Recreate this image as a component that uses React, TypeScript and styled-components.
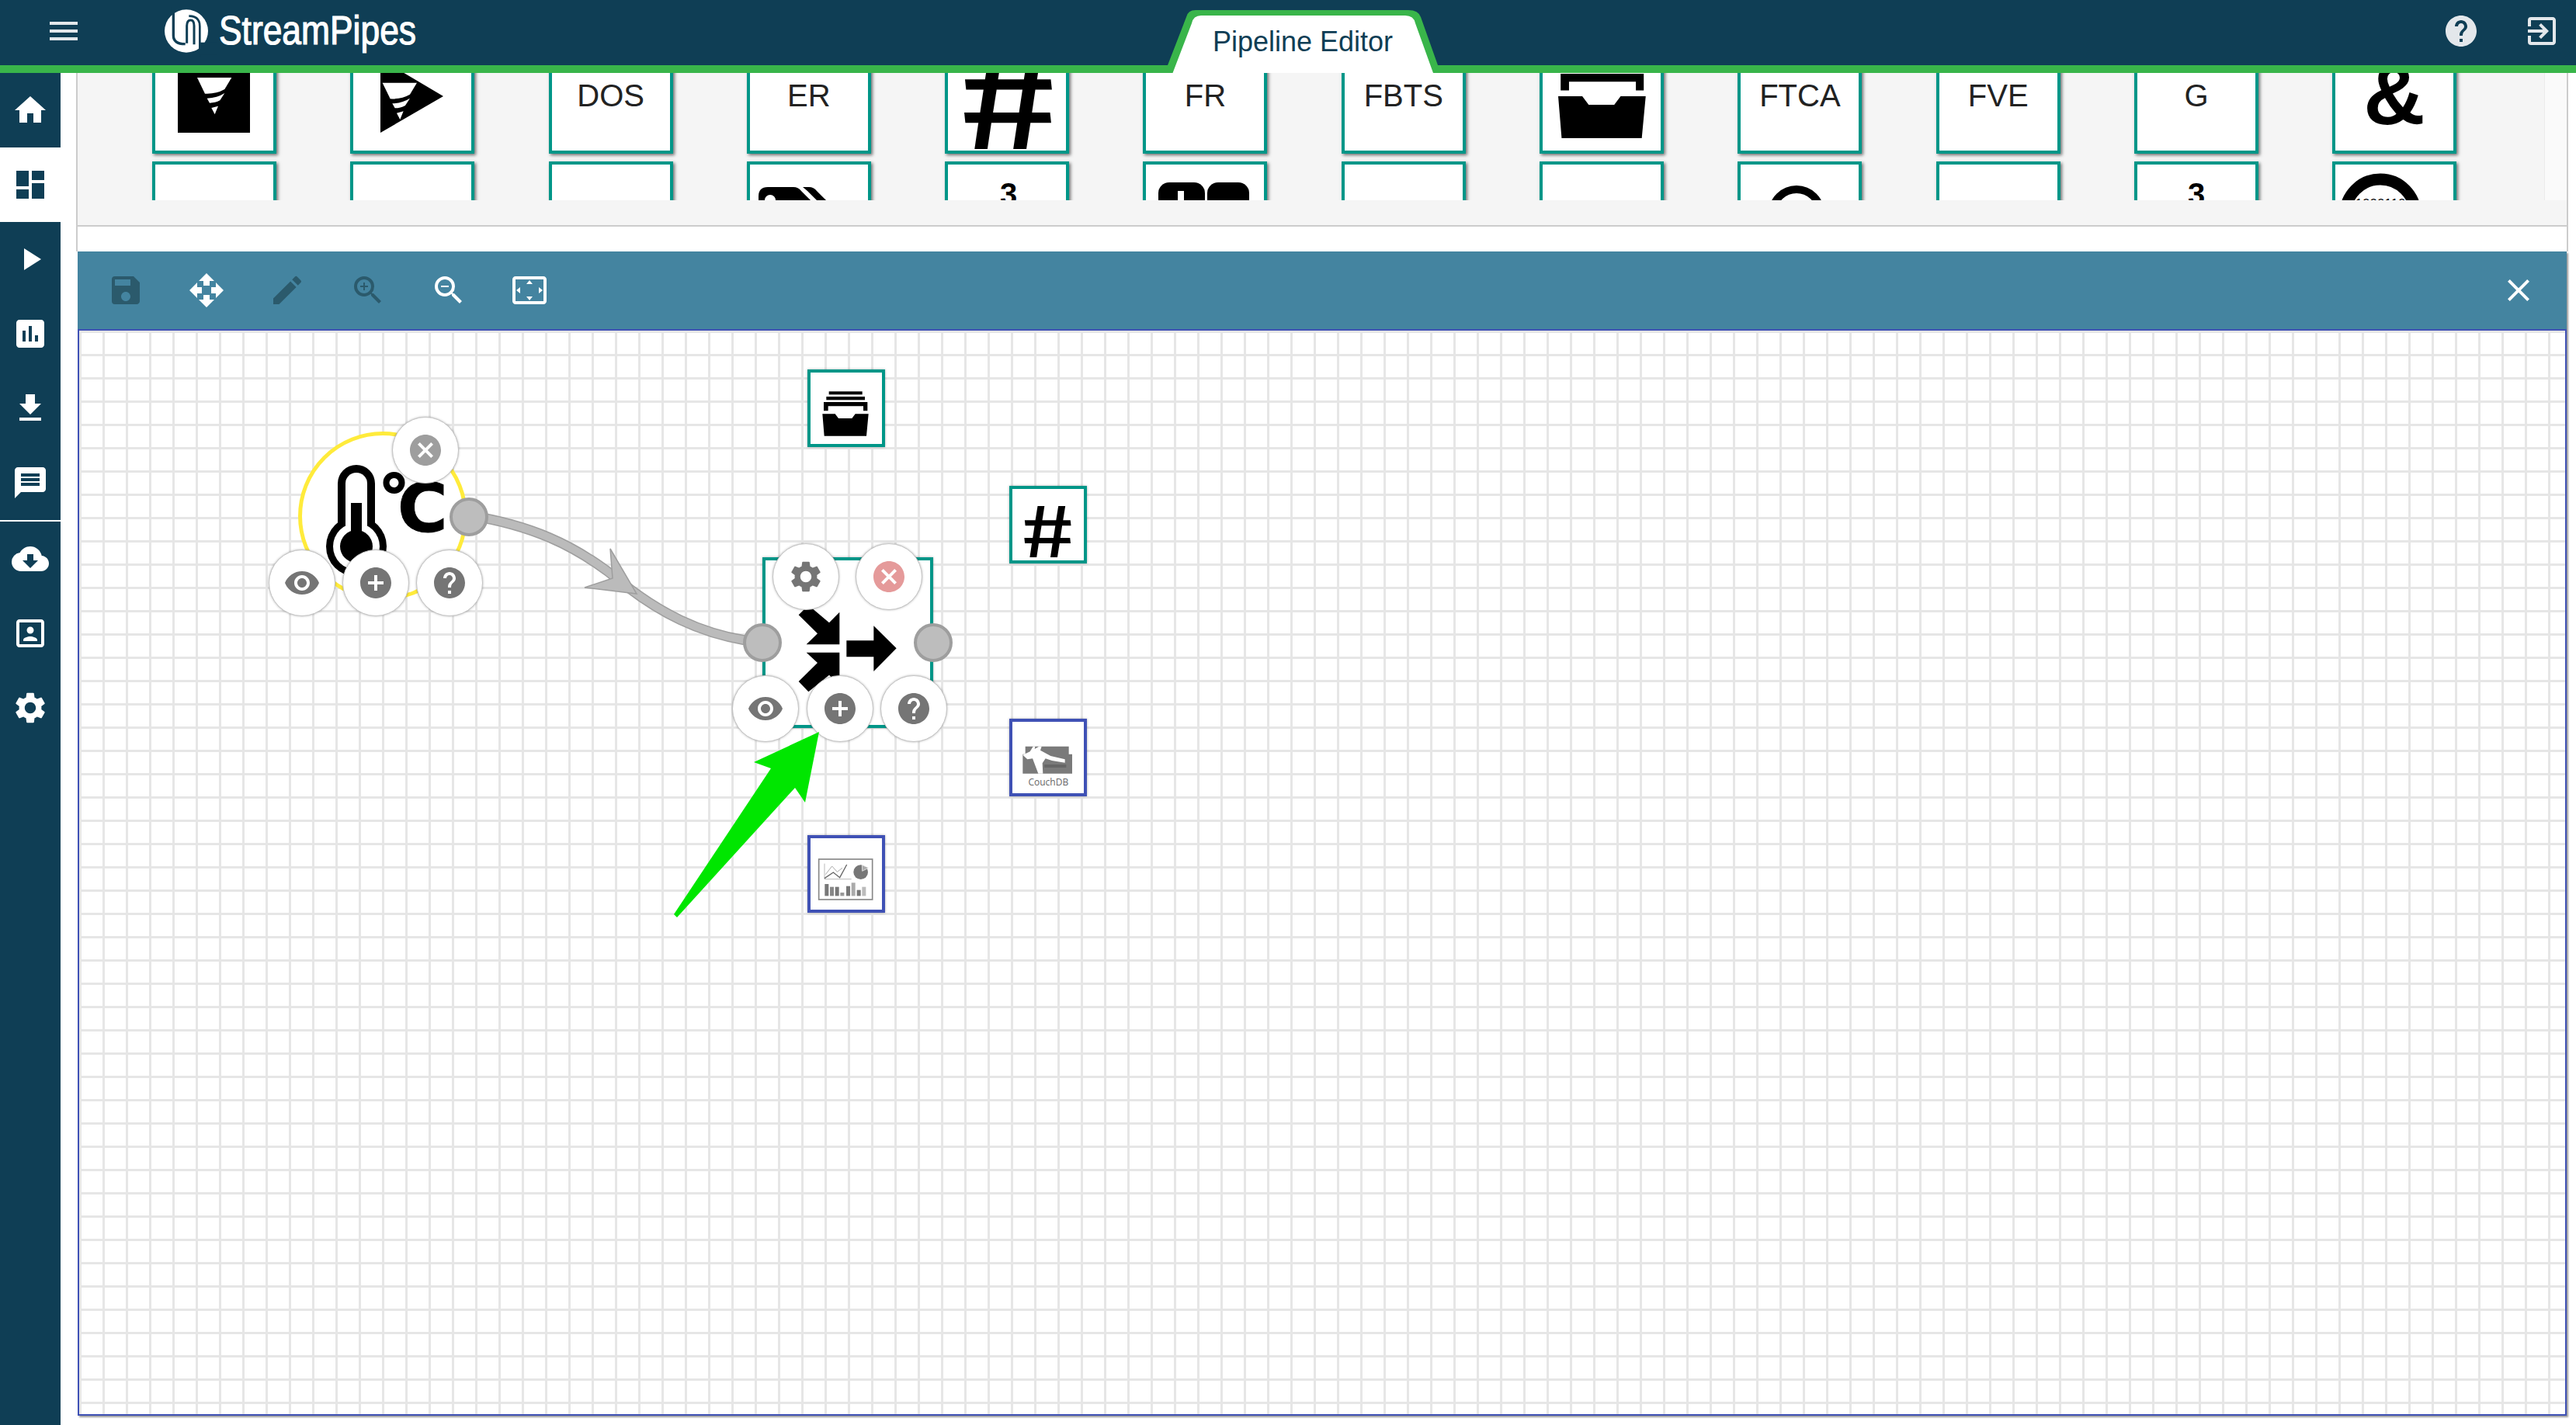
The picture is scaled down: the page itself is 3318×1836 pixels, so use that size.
import React from 'react'
import styled, { createGlobalStyle } from 'styled-components'
import {
  MdMenu, MdHelp, MdExitToApp, MdHome, MdDashboard, MdPlayArrow, MdInsertChart, MdFileDownload,
  MdMessage, MdCloudDownload, MdPortrait, MdSettings, MdSave, MdOpenWith, MdEdit, MdZoomIn,
  MdZoomOut, MdSettingsOverscan, MdClose, MdCancel, MdVisibility, MdAddCircle,
} from 'react-icons/md'

const DARK = '#0f3e55'
const GREEN = '#39b54a'
const TEAL = '#009688'
const BLUE = '#3f51b5'
const TOOLBAR = '#4484a0'
const DISABLED = '#2b5a6c'

// canvas padding box in page coordinates, nodes are given in page coordinates
const OX = 102
const OY = 426

const GlobalStyle = createGlobalStyle`
  html, body {
    margin: 0;
    background: #fff;
    font-family: "Liberation Sans", Arial, sans-serif;
  }
`

const Page = styled.div`
  display: flex;
  flex-direction: column;
  width: 3318px;
  height: 1836px;
  overflow: hidden;
`

const Header = styled.header`
  display: flex;
  align-items: center;
  box-sizing: border-box;
  height: 94px;
  padding: 0 20px 4px 58px;
  background: ${DARK};
  border-bottom: 10px solid ${GREEN};
  color: #e3e7eb;
  flex-shrink: 0;
`

const Logo = styled.svg`
  display: block;
  width: 80px;
  height: 72px;
  margin-left: 94px;
`

const LogoText = styled.span`
  display: inline-block;
  width: 258px;
  margin-left: 2px;
  font-size: 51px;
  line-height: 60px;
  color: #fff;
  white-space: nowrap;
  -webkit-text-stroke: 1.2px #fff;
  transform: scaleX(0.87);
  transform-origin: left center;
`

const Tab = styled.div`
  position: relative;
  align-self: flex-end;
  display: flex;
  justify-content: center;
  box-sizing: border-box;
  width: 348px;
  height: 81px;
  margin: 0 0 -14px 964px;
  padding-top: 20px;
  font-size: 36px;
  line-height: 42px;
  color: ${DARK};
`

const TabShape = styled.svg`
  position: absolute;
  top: 0;
  left: 0;
  width: 348px;
  height: 81px;
`

const TabLabel = styled.span`
  position: relative;
`

const HeaderActions = styled.div`
  display: flex;
  gap: 56px;
  margin-left: auto;
`

const Body = styled.div`
  display: flex;
  flex: 1;
  min-height: 0;
`

const Sidebar = styled.nav`
  display: flex;
  flex-direction: column;
  width: 78px;
  background: ${DARK};
  flex-shrink: 0;
`

const NavItem = styled.div<{ $active?: boolean }>`
  display: flex;
  align-items: center;
  justify-content: center;
  height: 96px;
  background: ${p => (p.$active ? '#fff' : DARK)};
  color: ${p => (p.$active ? DARK : '#fff')};
`

const NavDivider = styled.div`
  height: 2px;
  background: #fff;
`

const Main = styled.main`
  display: flex;
  flex-direction: column;
  width: 3210px;
  margin-left: 20px;
  padding-bottom: 12px;
`

const TopPart = styled.section`
  border-left: 2px solid #ccc;
  border-right: 2px solid #ccc;
`

const Palette = styled.div`
  display: flex;
  height: 164px;
  background: #f5f5f5;
`

const PaletteScroller = styled.div`
  flex: 1;
  overflow: hidden;
`

const PaletteGrid = styled.div`
  display: grid;
  grid-template-columns: repeat(12, 160px);
  grid-auto-rows: 160px;
  column-gap: 95.3px;
  row-gap: 10px;
  margin-top: -56px;
  padding-left: 96px;
`

const ScrollTrack = styled.div`
  width: 28px;
  background: #fafafa;
  border-left: 1px solid #ebebeb;
`

const PaletteFoot = styled.div`
  height: 32px;
  background: #f5f5f5;
  border-bottom: 2px solid #ccc;
`

const Spacer = styled.div`
  height: 32px;
  background: #fff;
`

const Card = styled.div`
  box-sizing: border-box;
  width: 160px;
  height: 160px;
  padding-top: 58px;
  background: #fff;
  border: 4px solid ${TEAL};
  box-shadow: 2px 2px 4px rgba(0, 0, 0, 0.55);
  text-align: center;
  font-size: 40px;
  line-height: 46px;
  color: #222;
`

const ArtCard = styled(Card)`
  padding-top: 0;
`

const Art = styled.svg`
  display: block;
  width: 100%;
  height: 100%;
`

const Editor = styled.section`
  display: flex;
  flex-direction: column;
  flex: 1;
  width: 3206px;
  margin-left: 2px;
  box-shadow: 2px 2px 2px rgba(0, 0, 0, 0.4);
`

const Toolbar = styled.div`
  display: flex;
  align-items: center;
  height: 100px;
  padding: 0 10px;
  background: ${TOOLBAR};
  flex-shrink: 0;
`

const ToolButton = styled.div<{ $off?: boolean; $end?: boolean }>`
  display: flex;
  align-items: center;
  justify-content: center;
  width: 104px;
  height: 100px;
  margin-left: ${p => (p.$end ? 'auto' : '0')};
  color: ${p => (p.$off ? DISABLED : '#fff')};
`

const Canvas = styled.div`
  position: relative;
  flex: 1;
  box-sizing: border-box;
  border: 2px solid ${BLUE};
  background-color: #fff;
  background-image:
    linear-gradient(to right, #e6e6e6 3px, transparent 3px),
    linear-gradient(to bottom, #e6e6e6 3px, transparent 3px);
  background-size: 30px 30px;
  background-position: 0 0, 0 0;
`

const Overlay = styled.svg`
  position: absolute;
  top: 0;
  left: 0;
  width: 100%;
  height: 100%;
  pointer-events: none;
`

const Node = styled.div<{ $x: number; $y: number; $size: number; $color: string }>`
  position: absolute;
  left: ${p => p.$x - OX}px;
  top: ${p => p.$y - OY}px;
  box-sizing: border-box;
  width: ${p => p.$size}px;
  height: ${p => p.$size}px;
  background: #fff;
  border: 4px solid ${p => p.$color};
  box-shadow: 0 0 3px rgba(0, 0, 0, 0.3);
`

const SensorNode = styled(Node)`
  border-width: 5px;
  border-radius: 50%;
  box-shadow: none;
`

const Port = styled.div<{ $x: number; $y: number }>`
  position: absolute;
  left: ${p => p.$x - OX - 25}px;
  top: ${p => p.$y - OY - 25}px;
  box-sizing: border-box;
  width: 50px;
  height: 50px;
  border-radius: 50%;
  background: #bdbdbd;
  border: 4px solid #9e9e9e;
`

const Bubble = styled.div<{ $x: number; $y: number; $color: string }>`
  position: absolute;
  left: ${p => p.$x - OX - 43}px;
  top: ${p => p.$y - OY - 43}px;
  display: flex;
  align-items: center;
  justify-content: center;
  box-sizing: border-box;
  width: 86px;
  height: 86px;
  border-radius: 50%;
  background: #fff;
  border: 1px solid #c4c4c4;
  box-shadow: 0 0 3px rgba(0, 0, 0, 0.3);
  color: ${p => p.$color};
`

const Tornado = ({ dx = 0, dy = 0 }: { dx?: number; dy?: number }) => (
  <g transform={`translate(${dx} ${dy})`} fill="#fff">
    <path d="M192 30 H325 L298 75 Q265 94 222 92 Z" />
    <path d="M230 110 Q270 108 298 90 L280 118 Q262 128 240 128 Z" />
    <path d="M247 147 L273 140 L260 172 Z" />
  </g>
)

const Inbox = () => (
  <g fill="#000">
    <rect x="263" y="193" width="129" height="12" />
    <rect x="253" y="213" width="149" height="13" />
    <path d="M243 234 H412 V268 H396 V250 H260 V268 H243 Z" />
    <path d="M238 280 H287 L300 297 H352 L365 280 H416 L408 365 H245 Z" />
  </g>
)

const labelCard = (label: string) => <Card key={label}>{label}</Card>

const artCard = (key: string, art: React.ReactNode) => (
  <ArtCard key={key}>
    <Art viewBox="4 4 152 152">{art}</Art>
  </ArtCard>
)

const BoldText = styled.text`
  font-family: "Liberation Sans", Arial, sans-serif;
  font-weight: 700;
  fill: #000;
`

const paletteCards = [
  artCard('drill', (
    <>
      <rect x="33" y="20" width="93" height="113" fill="#000" />
      <g transform="translate(-6 52) scale(0.3333)"><Tornado /></g>
    </>
  )),
  artCard('drill-arrow', (
    <>
      <path d="M39 38 L120 86 L39 133 Z" fill="#000" />
      <g transform="translate(-260 52) scale(0.3333)"><Tornado dx={713} dy={20} /></g>
    </>
  )),
  labelCard('DOS'),
  labelCard('ER'),
  artCard('hash', (
    <BoldText transform="translate(88 154) scale(1.22 1) skewX(5)" fontSize="182" textAnchor="middle">#</BoldText>
  )),
  labelCard('FR'),
  labelCard('FBTS'),
  artCard('inbox', <g transform="translate(-126.7 -91.2) scale(0.6333)"><Inbox /></g>),
  labelCard('FTCA'),
  labelCard('FVE'),
  labelCard('G'),
  artCard('amp', <BoldText x="80" y="122" fontSize="110" textAnchor="middle">&amp;</BoldText>),
  artCard('r2-1', null),
  artCard('r2-2', null),
  artCard('r2-3', null),
  artCard('r2-tags', (
    <>
      <path d="M15 60 V45 Q15 33 27 33 H60 Q66 33 70 38 L92 60 Z" fill="#000" />
      <path d="M72 33 H80 Q86 33 90 38 L112 60 H100 L78 38 Z" fill="#000" />
      <circle cx="30" cy="50" r="7" fill="#fff" />
    </>
  )),
  artCard('r2-three', <BoldText x="82" y="56" fontSize="40" textAnchor="middle">3</BoldText>),
  artCard('r2-blocks', (
    <>
      <rect x="20" y="27" width="60" height="60" rx="14" fill="#000" />
      <rect x="83" y="27" width="54" height="60" rx="14" fill="#000" />
      <rect x="45" y="38" width="8" height="30" fill="#fff" />
    </>
  )),
  artCard('r2-7', null),
  artCard('r2-8', null),
  artCard('r2-ring', <circle cx="76" cy="67" r="31" fill="none" stroke="#000" strokeWidth="10" />),
  artCard('r2-10', null),
  artCard('r2-three-b', <BoldText x="80" y="56" fontSize="40" textAnchor="middle">3</BoldText>),
  artCard('r2-count', (
    <>
      <circle cx="62" cy="68" r="45" fill="none" stroke="#000" strokeWidth="15" />
      <text x="62" y="60" fontSize="17" textAnchor="middle" fontFamily="Liberation Sans, sans-serif" fill="#000">1000110</text>
    </>
  )),
]

const navTop = [
  { icon: MdHome },
  { icon: MdDashboard, active: true },
  { icon: MdPlayArrow },
  { icon: MdInsertChart },
  { icon: MdFileDownload },
  { icon: MdMessage },
]
const navBottom = [MdCloudDownload, MdPortrait, MdSettings]

const tools = [
  { icon: MdSave, off: true },
  { icon: MdOpenWith },
  { icon: MdEdit, off: true },
  { icon: MdZoomIn, off: true },
  { icon: MdZoomOut },
  { icon: MdSettingsOverscan },
]

const Thermometer = () => (
  <Art viewBox="389 561 208 208">
    <rect x="435" y="599" width="48" height="100" rx="24" fill="#000" />
    <circle cx="459" cy="704" r="39" fill="#000" />
    <rect x="445" y="609" width="28" height="90" rx="14" fill="#fff" />
    <circle cx="459" cy="704" r="30" fill="#fff" />
    <rect x="452" y="648" width="14" height="50" fill="#000" />
    <circle cx="459" cy="704" r="21" fill="#000" />
    <circle cx="507.5" cy="622" r="10" fill="none" stroke="#000" strokeWidth="8" />
    <text x="512" y="685" fontSize="88" fontWeight="700" fontFamily="DejaVu Sans, sans-serif" fill="#000" stroke="#000" strokeWidth="1">C</text>
  </Art>
)

const MergeIcon = () => (
  <Art viewBox="439 187 636 636">
    <path d="M567 398 L605 360 L685 428 L725 387 V512 H597 L640 470 Z" fill="#000" />
    <path d="M597 543 H725 V670 L685 630 L605 695 L567 655 L640 583 Z" fill="#000" />
    <path d="M752 497 H857 V440 L945 527 L857 616 V560 H752 Z" fill="#000" />
  </Art>
)

const DashboardIcon = () => {
  const bars = [
    [247, 717, '#777'], [267, 728, '#888'], [287, 728, '#777'], [307, 750, '#999'],
    [330, 725, '#777'], [350, 712, '#aaa'], [371, 740, '#777'], [391, 728, '#bbb'],
  ] as const
  return (
    <Art viewBox="192 540 276 276">
      <rect x="224" y="621" width="207" height="156" fill="#fff" stroke="#888" strokeWidth="5" />
      <path d="M246 638 V698 H350" fill="none" stroke="#bbb" strokeWidth="3" />
      <path d="M250 680 L275 648 L295 670 L315 655" fill="none" stroke="#aaa" strokeWidth="3" />
      <path d="M246 695 L280 672 L305 692 L332 642" fill="none" stroke="#666" strokeWidth="4" />
      <circle cx="386" cy="671" r="28" fill="#777" />
      <path d="M391 644 L417 654 L392 667 Z" fill="#aaa" stroke="#fff" strokeWidth="2" />
      {bars.map(([x, top, color]) => (
        <rect key={x} x={x} y={top} width="15" height={763 - top} fill={color} />
      ))}
    </Art>
  )
}

const CouchIcon = () => (
  <Art viewBox="972 90 276 276">
    <path d="M1022 185 H1190 V215 H1203 V290 H1012 V215 H1022 Z" fill="#7a7a7a" />
    <path d="M1012 218 L1040 205 L1052 185 H1060 L1058 195 L1075 185 H1085 L1080 200 L1120 222 L1175 235 V248 L1125 240 L1100 232 L1088 250 L1090 290 H1072 L1050 232 L1030 235 Z" fill="#fff" />
    <rect x="1095" y="255" width="85" height="12" fill="#666" />
    <text x="1111" y="337" fontSize="36" textAnchor="middle" fontFamily="Open Sans, sans-serif" fill="#666">CouchDB</text>
  </Art>
)

export default function App() {
  return (
    <>
      <GlobalStyle />
      <Page>
        <Header>
          <MdMenu size={48} />
          <Logo viewBox="0 0 240 216">
            <ellipse cx="120" cy="108" rx="84" ry="83" fill="#fff" />
            <g fill="none" stroke={DARK}>
              <path d="M70 15 V125 Q70 158 116 158" strokeWidth="10" />
              <path d="M122 155 V88 Q122 66 137 66 Q150 66 150 88 V160" strokeWidth="9" />
              <path d="M172 205 V90 Q172 50 130 50" strokeWidth="8" />
            </g>
            <path d="M168 200 H240 V152 H168 Z" fill={DARK} />
          </Logo>
          <LogoText>StreamPipes</LogoText>
          <Tab>
            <TabShape viewBox="0 0 348 81">
              <path d="M0 71 L24 9 Q26 0 36 0 H310 Q323 0 326 9 L348 71 Z" fill={GREEN} />
              <path d="M6.5 81 L31 17 Q33 7 43 7 H306 Q317 7 319 17 L342 81 Z" fill="#fff" />
            </TabShape>
            <TabLabel>Pipeline Editor</TabLabel>
          </Tab>
          <HeaderActions>
            <MdHelp size={48} />
            <MdExitToApp size={48} />
          </HeaderActions>
        </Header>
        <Body>
          <Sidebar>
            {navTop.map(({ icon: Icon, active }, i) => (
              <NavItem key={i} $active={active}><Icon size={48} /></NavItem>
            ))}
            <NavDivider />
            {navBottom.map((Icon, i) => (
              <NavItem key={i}><Icon size={48} /></NavItem>
            ))}
          </Sidebar>
          <Main>
            <TopPart>
              <Palette>
                <PaletteScroller>
                  <PaletteGrid>{paletteCards}</PaletteGrid>
                </PaletteScroller>
                <ScrollTrack />
              </Palette>
              <PaletteFoot />
              <Spacer />
            </TopPart>
            <Editor>
              <Toolbar>
                {tools.map(({ icon: Icon, off }, i) => (
                  <ToolButton key={i} $off={off}><Icon size={48} /></ToolButton>
                ))}
                <ToolButton $end><MdClose size={48} /></ToolButton>
              </Toolbar>
              <Canvas>
                <Overlay viewBox="102 426 3202 1396">
                  <path d="M604 664 C680 676 740 700 800 750 C850 790 900 815 960 825" fill="none" stroke="#9e9e9e" strokeWidth="13" />
                  <path d="M604 664 C680 676 740 700 800 750 C850 790 900 815 960 825" fill="none" stroke="#bbb" strokeWidth="10" />
                  <path d="M786 707 L820 765 L753 757 L789 745 Z" fill="#bbb" stroke="#9e9e9e" strokeWidth="1.5" />
                </Overlay>

                <SensorNode $x={384} $y={556} $size={218} $color="#ffeb3b"><Thermometer /></SensorNode>
                <Port $x={604} $y={666} />
                <Bubble $x={548} $y={580} $color="#9e9e9e"><MdCancel size={48} /></Bubble>
                <Bubble $x={389} $y={751} $color="#757575"><MdVisibility size={48} /></Bubble>
                <Bubble $x={484} $y={751} $color="#757575"><MdAddCircle size={48} /></Bubble>
                <Bubble $x={579} $y={751} $color="#757575"><MdHelp size={48} /></Bubble>

                <Node $x={982} $y={718} $size={220} $color={TEAL}><MergeIcon /></Node>
                <Port $x={982} $y={828} />
                <Port $x={1202} $y={828} />
                <Bubble $x={1038} $y={743} $color="#757575"><MdSettings size={48} /></Bubble>
                <Bubble $x={1145} $y={743} $color="#e59a9a"><MdCancel size={48} /></Bubble>
                <Bubble $x={986} $y={913} $color="#757575"><MdVisibility size={48} /></Bubble>
                <Bubble $x={1082} $y={913} $color="#757575"><MdAddCircle size={48} /></Bubble>
                <Bubble $x={1177} $y={913} $color="#757575"><MdHelp size={48} /></Bubble>

                <Node $x={1040} $y={476} $size={100} $color={TEAL}>
                  <Art viewBox="192 120 276 276"><Inbox /></Art>
                </Node>
                <Node $x={1300} $y={626} $size={100} $color={TEAL}>
                  <Art viewBox="4 4 92 92">
                    <BoldText transform="translate(53 92) scale(1.22 1) skewX(5)" fontSize="97" textAnchor="middle">#</BoldText>
                  </Art>
                </Node>
                <Node $x={1300} $y={926} $size={100} $color={BLUE}><CouchIcon /></Node>
                <Node $x={1040} $y={1076} $size={100} $color={BLUE}><DashboardIcon /></Node>

                <Overlay viewBox="102 426 3202 1396">
                  <path d="M1055 943 L1037 1034 L1024 1015 L872 1182 L868 1178 L993 990 L971 982 Z" fill="#00e600" />
                </Overlay>
              </Canvas>
            </Editor>
          </Main>
        </Body>
      </Page>
    </>
  )
}
